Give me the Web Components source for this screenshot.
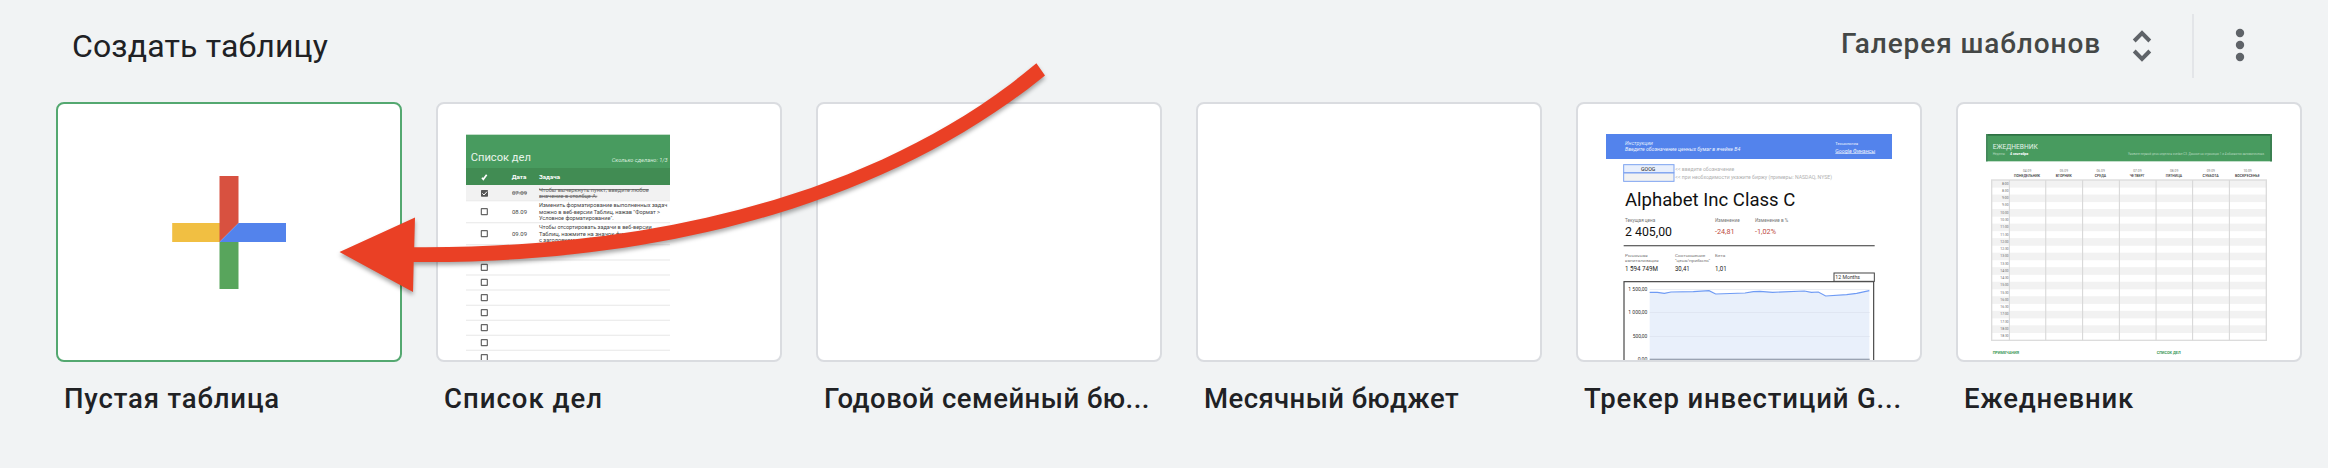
<!DOCTYPE html>
<html lang="ru">
<head>
<meta charset="utf-8">
<title>Создать таблицу</title>
<style>
html,body{margin:0;height:468px;overflow:hidden;background:#f1f3f4}
body{font-family:Roboto,"Noto Sans",sans-serif;color:#202124}
</style>
</head>
<body>
<template-gallery>
  <gallery-header slot="header"><fit-text slot="title" width="256">Создать таблицу</fit-text><fit-text slot="link" width="260">Галерея шаблонов</fit-text></gallery-header>
  <template-card primary><blank-thumb></blank-thumb><fit-text slot="label" width="216">Пустая таблица</fit-text></template-card>
  <template-card><todo-thumb></todo-thumb><fit-text slot="label" width="159">Список дел</fit-text></template-card>
  <template-card><fit-text slot="label" width="326">Годовой семейный бю...</fit-text></template-card>
  <template-card><fit-text slot="label" width="255">Месячный бюджет</fit-text></template-card>
  <template-card><stock-thumb></stock-thumb><fit-text slot="label" width="318">Трекер инвестиций G...</fit-text></template-card>
  <template-card><planner-thumb></planner-thumb><fit-text slot="label" width="170">Ежедневник</fit-text></template-card>
  <pointer-arrow slot="overlay"></pointer-arrow>
</template-gallery>
<script>
const define = (name, html, setup) => customElements.define(name, class extends HTMLElement {
  constructor() {
    super();
    this.attachShadow({mode: 'open'}).innerHTML = html;
  }
  connectedCallback() { if (setup) setup(this); }
});

// One line of SVG text stretched to a known width.
const t = (x, y, size, width, text, extra = '') =>
  `<text x="${x}" y="${y}" font-size="${size}" textLength="${width}" lengthAdjust="spacingAndGlyphs" ${extra}>${text}</text>`;
const r = (x, y, w, h, fill, extra = '') =>
  `<rect x="${x}" y="${y}" width="${w}" height="${h}" fill="${fill}" ${extra}/>`;
// The same, crossed out.
const struck = (x, y, size, width, text) =>
  t(x, y, size, width, text, 'fill="#666"') + r(x, y - 7.5, width, 2.6, '#666');
const thumb = (dy, body) => `<style>:host{display:block;width:342px;height:256px}svg{display:block;font-family:Roboto,sans-serif}</style>
  <svg width="342" height="256" viewBox="0 0 342 256"><g transform="translate(-8 ${dy}) scale(.333333)">${body}</g></svg>`;

define('template-gallery', `<style>
  :host{display:block;position:relative;width:2328px;height:468px}
  .row{display:flex;gap:34px;padding-left:56px}
</style><slot name="header"></slot><div class="row"><slot></slot></div><slot name="overlay"></slot>`);

define('gallery-header', `<style>
  :host{display:flex;align-items:center;height:102px;box-sizing:border-box;padding:0 70px 10px 72px}
  .title{font-size:32px;line-height:40px;flex:1}
  .link{font-size:28px;line-height:36px;font-weight:500;color:#444746;padding-bottom:4px}
  .sort{margin-left:30px}
  .rule{width:2px;height:64px;background:#e3e5e8;margin:0 28px 0 39px}
  svg{display:block;fill:none}
</style>
<div class="title"><slot name="title"></slot></div>
<div class="link"><slot name="link"></slot></div>
<svg class="sort" width="22" height="36" viewBox="0 0 22 36"><path d="M3.2 13l7.8-7.8 7.8 7.8M3.2 23l7.8 7.8 7.8-7.8" stroke="#5f6368" stroke-width="4"/></svg>
<div class="rule"></div>
<svg width="36" height="36" viewBox="0 0 36 36"><g fill="#5f6368"><circle cx="18" cy="5" r="4.2"/><circle cx="18" cy="17" r="4.2"/><circle cx="18" cy="29" r="4.2"/></g></svg>`);

define('template-card', `<style>
  :host{display:block;width:346px}
  .box{box-sizing:border-box;height:260px;border:2px solid #dadce0;border-radius:8px;background:#fff;overflow:hidden}
  :host([primary]) .box{border-color:#54a870}
  .label{padding:19px 8px 0;font-size:27.5px;line-height:36px;font-weight:500;white-space:nowrap}
</style><div class="box"><slot></slot></div><div class="label"><slot name="label"></slot></div>`);

define('blank-thumb', `<style>:host,svg{display:block}</style>
<svg width="342" height="256" viewBox="0 0 342 256">
<path d="M114.2 119H162v19h-47.8z" fill="#f1bf42"/><path d="M161.5 72h19v47l-19 19z" fill="#d85140"/>
<path d="M180.5 119H228v19h-66.5z" fill="#5383ec"/><path d="M161.5 138h19v47h-19z" fill="#58a55c"/></svg>`);

const lines = [332, 398, 464, 510, 555, 600, 646, 691, 736, 781];
const boxes = [365, 431, 487, 532, 577, 623, 668, 713, 758, 803];
const ink = 'fill="#444"';
define('todo-thumb', thumb(-14,
  r(108, 134, 612, 101, '#489b5f') + r(108, 234, 612, 51, '#418c53') + r(108, 285, 612, 47, '#f2f2f2') +
  lines.map(y => r(108, y - 2, 612, 4, '#ededed')).join('') +
  t(122, 214, 34, 181, 'Список дел', 'fill="#e8f4eb"') +
  t(545, 216, 17, 168, 'Сколько сделано: 1/3', 'fill="#d7ecdc" font-style="italic"') +
  '<path d="M156 263l4 5 10-14" fill="none" stroke="#fff" stroke-width="5"/>' +
  t(245, 268, 18, 44, 'Дата', 'fill="#fff" font-weight="700"') +
  t(327, 268, 18, 63, 'Задача', 'fill="#fff" font-weight="700"') +
  r(153, 300, 21, 20, '#555', 'rx="2"') + '<path d="M157 310l5 5 9-10" fill="none" stroke="#fff" stroke-width="3"/>' +
  boxes.map(y => r(154, y - 9, 18, 18, 'none', 'stroke="#666" stroke-width="3.6" rx="1"')).join('') +
  struck(246, 315, 18, 45, '07.09') + t(246, 371, 18, 45, '08.09', ink) + t(246, 437, 18, 45, '09.09', ink) +
  struck(327, 305, 18, 329, 'Чтобы вычеркнуть пункт, введите любое') +
  struck(327, 325, 18, 175, 'значение в столбце A.') +
  t(327, 352, 18, 385, 'Изменить форматирование выполненных задач', ink) +
  t(327, 371, 18, 363, 'можно в веб-версии Таблиц, нажав "Формат &gt;', ink) +
  t(327, 391, 18, 224, 'Условное форматирование".', ink) +
  t(327, 417, 18, 338, 'Чтобы отсортировать задачи в веб-версии', ink) +
  t(327, 437, 18, 300, 'Таблиц, нажмите на значок фильтра', ink) +
  t(327, 457, 18, 180, 'с заголовком столбца.', ink)));

const small = 'fill="#777"', pale = 'fill="#b0b0b0"';
define('stock-thumb', thumb(-9,
  r(108, 117, 858, 75, '#5383ec') +
  t(165, 150, 14, 84, 'Инструкции', 'fill="#dfe9fd" font-style="italic"') +
  t(165, 167, 14, 346, 'Введите обозначение ценных бумаг в ячейке B4', 'fill="#eef3fe" font-style="italic"') +
  t(796, 150, 13, 68, 'Технология', 'fill="#eef3fe"') +
  t(796, 173, 15, 120, 'Google Финансы', 'fill="#eef3fe"') + r(796, 175, 120, 2, '#dfe9fd') +
  r(161, 209, 151, 24, '#e8effc', 'stroke="#7da2f0" stroke-width="3"') +
  r(161, 234, 151, 25, '#f2f2f2', 'stroke="#7da2f0" stroke-width="3"') +
  t(213, 228, 16, 43, 'GOOG', 'fill="#222"') +
  t(316, 228, 15, 177, '&lt;&lt; введите обозначение', pale) +
  t(316, 252, 15, 470, '&lt;&lt; при необходимости укажите биржу (примеры: NASDAQ, NYSE)', pale) +
  t(165, 333, 56, 511, 'Alphabet Inc Class C', 'fill="#111"') +
  t(165, 381, 14, 91, 'Текущая цена', small) + t(435, 381, 14, 74, 'Изменение', small) + t(555, 381, 14, 100, 'Изменение в %', small) +
  t(165, 423, 38, 141, '2 405,00', 'fill="#111"') +
  t(435, 417, 22, 59, '-24,81', 'fill="#bd4b41"') + t(555, 417, 22, 63, '-1,02%', 'fill="#bd4b41"') +
  r(161, 450, 753, 4, '#666') +
  t(165, 486, 13, 68, 'Рыночная', small) + t(165, 501, 13, 101, 'капитализация', small) +
  t(315, 486, 13, 91, 'Соотношение', small) + t(315, 501, 13, 105, '"цена/прибыль"', small) + t(435, 486, 13, 31, 'Бета', small) +
  t(165, 527, 19, 99, '1 594 749M', 'fill="#222"') + t(315, 527, 19, 44, '30,41', 'fill="#222"') + t(435, 527, 19, 35, '1,01', 'fill="#222"') +
  r(162, 560, 749, 260, '#fff', 'stroke="#444" stroke-width="3.5"') +
  r(792, 534, 121, 25, '#fff', 'stroke="#444" stroke-width="3"') +
  t(796, 553, 15, 74, '12 Months', 'fill="#333"') +
  '<path d="M239 592L262 592 283 595 303 591 370 590 417 587 437 597 525 594 550 590 570 589 608 592 703 588 724 592 745 591 767 603 830 599 860 595 898 587V794H239z" fill="#e9f0fb"/>' +
  r(239, 582, 660, 2, '#e2e6ef') + r(239, 652, 660, 2, '#dbe2ee') + r(239, 723, 660, 2, '#dbe2ee') + r(239, 791, 660, 4, '#9aa3b2') +
  '<path d="M239 592L262 592 283 595 303 591 370 590 417 587 437 597 525 594 550 590 570 589 608 592 703 588 724 592 745 591 767 603 830 599 860 595 898 587" fill="none" stroke="#6f9bf4" stroke-width="3.4"/>' +
  t(175, 588, 15, 57, '1 500,00', 'fill="#333"') + t(175, 658, 15, 57, '1 000,00', 'fill="#333"') +
  t(188, 729, 15, 44, '500,00', 'fill="#333"') + t(203, 798, 15, 29, '0,00', 'fill="#333"')));

const days = [['04.09', 'ПОНЕДЕЛЬНИК', 78], ['05.09', 'ВТОРНИК', 48], ['06.09', 'СРЕДА', 34], ['07.09', 'ЧЕТВЕРГ', 45], ['08.09', 'ПЯТНИЦА', 49], ['09.09', 'СУББОТА', 49], ['10.09', 'ВОСКРЕСЕНЬЕ', 74]];
const hours = ['8:00', '8:30', '9:00', '9:30', '10:00', '10:30', '11:00', '11:30', '12:00', '12:30', '13:00', '13:30', '14:00', '14:30', '15:00', '15:30', '16:00', '16:30', '17:00', '17:30', '18:00', '18:30'];
const step = 21.8;
define('planner-thumb', thumb(-9,
  r(108, 117, 858, 82, '#489b5f') + r(108, 117, 858, 5, '#2e7144') + r(108, 117, 5, 82, '#43875a') + r(960, 117, 6, 82, '#3b8051') +
  t(128, 163, 21, 135, 'ЕЖЕДНЕВНИК', 'fill="#e4f2e8"') +
  t(128, 181, 11, 38, 'Неделя:', 'fill="#b5d8bf"') + t(180, 181, 11, 55, '4 сентября', 'fill="#fff" font-weight="700"') +
  t(534, 181, 10, 410, 'Укажите первый день недели в ячейке C3. Данные на страницах 1 и 4 обновятся автоматически.', 'fill="#b5d8bf"') +
  days.map(([d, n, w], i) => { const c = 231 + 110.2 * i;
    return t(c - 12, 230, 11, 25, d, small) + t(c - w / 2, 245, 12, w, n, 'fill="#333" font-weight="500"'); }).join('') +
  hours.map((h, i) => { const w = h.length > 4 ? 25 : 20;
    return (i % 2 ? '' : r(125, 255 + step * i, 824, step + 1, '#f2f2f2')) + t(176 - w, 269 + step * i, 11, w, h, 'fill="#666"'); }).join('') +
  r(125, 255, 824, 481, 'none', 'stroke="#dcdcdc" stroke-width="4"') +
  [178, 287, 397.5, 508, 618, 727.5, 838].map(x => r(x - 1.5, 255, 3.4, 481, '#d9d9d9')).join('') +
  t(128, 776, 12, 79, 'ПРИМЕЧАНИЯ', 'fill="#3f9a5a" font-weight="700"') + t(620, 776, 12, 72, 'СПИСОК ДЕЛ', 'fill="#3f9a5a" font-weight="700"')));

define('pointer-arrow', `<style>
  :host{position:absolute;left:330px;top:50px;width:730px;height:260px;pointer-events:none}
  svg{display:block;filter:drop-shadow(0 3px 2px rgba(0,0,0,.34))}
</style>
<svg width="730" height="260" viewBox="330 50 730 260"><path fill="#ea4025" d="M339.5 252L415 217.5 414.2 247.2C650 249 880 195 1036.4 63.3L1045 75.5C885 205 660 264 413.7 262L413 292z"/></svg>`);

// Text whose letter-spacing is set so that the line takes the requested width.
// Registered last: it measures itself in the font that its parents give it.
define('fit-text', `<style>:host{display:inline-block;white-space:nowrap}</style><slot></slot>`, el => {
  const want = +el.getAttribute('width');
  el.style.letterSpacing = ((want - el.getBoundingClientRect().width) / el.textContent.length).toFixed(3) + 'px';
});
</script>
</body>
</html>
